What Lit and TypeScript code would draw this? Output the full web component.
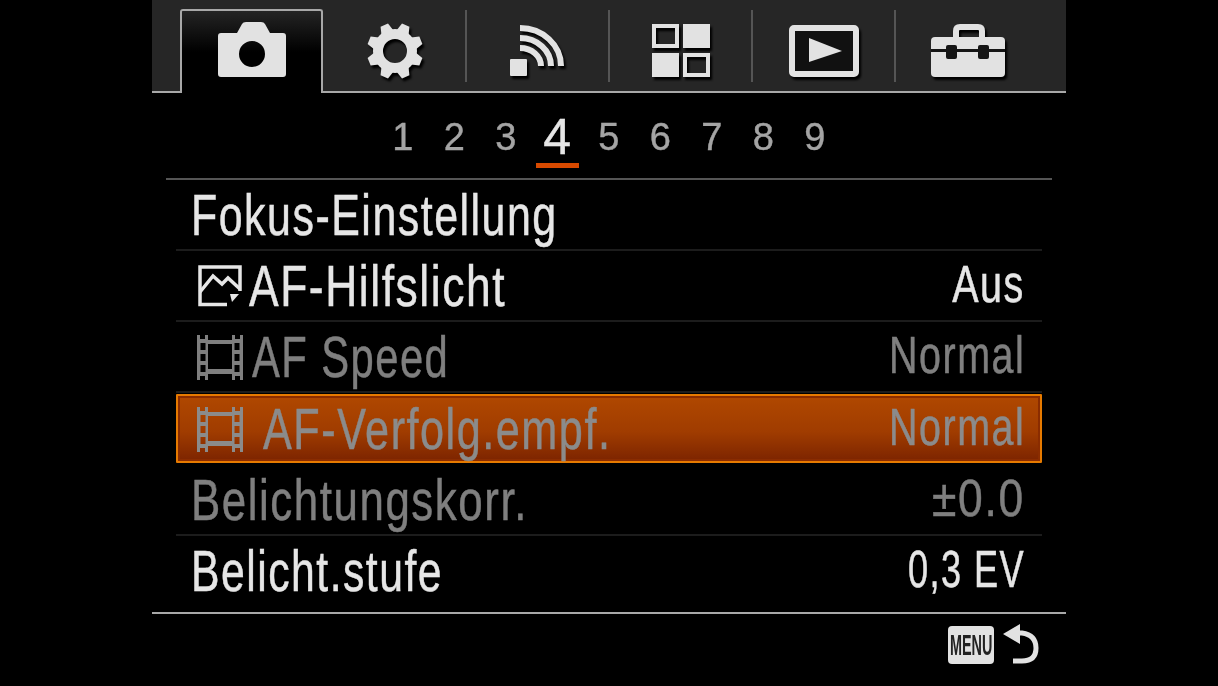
import { LitElement, html, css, svg } from "lit";
import { customElement } from "lit/decorators.js";

const camera = html`<svg width="68" height="55" viewBox="0 0 68 55"><path fill="#e2e2e2" fill-rule="evenodd" d="M3 11H19L24 2Q25 0 28 0H43Q46 0 47 2L52 11H65Q68 11 68 14V52Q68 55 65 55H3Q0 55 0 52V14Q0 11 3 11ZM34 19A13 13 0 1 0 34.01 45A13 13 0 1 0 34 19Z"/></svg>`;
const teeth = [22.5, 67.5, 112.5, 157.5, 202.5, 247.5, 292.5, 337.5].map(
  (a) => svg`<path transform="rotate(${a} 30 30)" fill="#e2e2e2" d="M23 12L26 2H34L37 12Z"/>`
);
const gear = html`<svg width="60" height="60" viewBox="0 0 60 60"><circle cx="30" cy="30" r="17" fill="none" stroke="#e2e2e2" stroke-width="10"/>${teeth}</svg>`;
const signal = html`<svg width="55" height="52" viewBox="0 0 55 52"><g fill="none" stroke="#e2e2e2" stroke-width="6"><path d="M10 3A41 38 0 0 1 51 41"/><path d="M10 13A31 28 0 0 1 41 41"/><path d="M10 23A21 18 0 0 1 31 41"/></g><rect x="0" y="34" width="17" height="17" rx="1" fill="#e2e2e2"/></svg>`;
const grid = html`<svg width="58" height="53" viewBox="0 0 58 53"><g fill="none" stroke="#e2e2e2" stroke-width="4"><rect x="2" y="2" width="23" height="20"/><rect x="33" y="31" width="23" height="20"/></g><rect x="31" y="0" width="27" height="24" fill="#e2e2e2"/><rect x="0" y="29" width="27" height="24" fill="#e2e2e2"/></svg>`;
const play = html`<svg width="70" height="52" viewBox="0 0 70 52"><rect x="3" y="3" width="64" height="46" rx="2" fill="#111" stroke="#e2e2e2" stroke-width="6"/><path d="M20 13L53 26L20 37Z" fill="#e2e2e2"/></svg>`;
const toolbox = html`<svg width="74" height="54" viewBox="0 0 74 54"><path fill="none" stroke="#e2e2e2" stroke-width="6" d="M25 14V7Q25 3 29 3H47Q51 3 51 7V14"/><path fill="#e2e2e2" d="M4 13H70Q74 13 74 17V25H0V17Q0 13 4 13Z"/><path fill="#e2e2e2" d="M0 28H74V49Q74 53 70 53H4Q0 53 0 49Z"/><g fill="#161616"><rect x="0" y="25" width="74" height="3"/><rect x="15" y="21" width="11" height="14" rx="2"/><rect x="47" y="21" width="11" height="14" rx="2"/></g></svg>`;
const landscape = html`<svg class="row-icon" width="44" height="42" viewBox="0 0 44 42"><path fill="none" stroke="currentColor" stroke-width="3.5" d="M29 39.5H2V2H42V26"/><path fill="none" stroke="currentColor" stroke-width="3.5" d="M2 27L15 11L24 19L30 13L42 24"/><path fill="currentColor" d="M32 29H41L34 37Z"/></svg>`;
const filmHoles = [8, 19, 30]
  .map((y) => `M3.5 ${y}h5v7h-5zM37.5 ${y}h5v7h-5z`)
  .join("");
const film = html`<svg class="row-icon film" width="46" height="45" viewBox="0 0 46 45"><path fill="currentColor" fill-rule="evenodd" d="M0 0H3V4H8V0H11V5H35V0H38V4H43V0H46V45H43V41H38V45H35V39H11V45H8V41H3V45H0ZM11 9V34H35V9Z${filmHoles}"/></svg>`;
const backArrow = html`<svg width="38" height="42" viewBox="0 0 38 42"><path fill="#e2e2e2" d="M0 10L17 0L17 20Z"/><path fill="none" stroke="#e2e2e2" stroke-width="5" d="M15 9H19Q33 11 33 24Q33 37 19 37H10"/></svg>`;

const fit = (x: number) => `transform: scaleX(${x})`;

@customElement("app-root")
export class AppRoot extends LitElement {
  static styles = css`
    :host { display: block; width: 1218px; height: 686px; background: #000; overflow: hidden;
      font-family: "Liberation Sans", sans-serif; }
    .screen { width: 914px; height: 686px; margin: 0 auto; display: flex; flex-direction: column; filter: blur(0.45px); }
    .tabs { height: 91px; background: #262626; border-bottom: 2px solid #a8a8a8; display: flex; padding-left: 28px; flex: none; }
    .tab { width: 143px; height: 72px; margin-top: 10px; padding-top: 9px; display: flex; align-items: center; justify-content: center; border-right: 2px solid #555; box-sizing: border-box; }
    .tab svg { filter: drop-shadow(2px 3px 1px #000); }
    .tab.active { height: 84px; margin: 9px 1px -2px 0; background: linear-gradient(#242424, #000 50%); border: 2px solid #a8a8a8; border-bottom: none; border-radius: 3px 3px 0 0; padding: 0 0 5px; }
    .tab.active svg { filter: none; }
    .tab.last { border-right: none; }
    .pages { height: 85px; flex: none; display: flex; padding-left: 225px; color: #a4a4a4; font-size: 38px; -webkit-text-stroke: 0.4px #a4a4a4; }
    .page { width: 51.5px; text-align: center; line-height: 89px; }
    .page.current { color: #e6e6e6; font-size: 50px; position: relative; -webkit-text-stroke: 0.4px #e6e6e6; }
    .page.current::after { content: ""; position: absolute; left: 4px; right: 4px; top: 70px; height: 5px; background: #d84a00; }
    .list { margin: 0 14px; border-top: 2px solid #555; flex: none; }
    .row { height: 69px; margin: 0 10px; border-bottom: 2px solid #1c1c1c; display: flex; align-items: center; padding: 0 17px 0 15px; color: #e6e6e6; -webkit-text-stroke: 0.5px currentColor; }
    .row.last { border-bottom: none; height: 69px; padding-bottom: 5px; }
    .row.off { color: #7f7f7f; }
    .row.sel { height: 65px; margin-top: 1px; margin-bottom: 2px; color: #8b8b8b; border: 2px solid #e67a00; box-shadow: inset 0 0 0 2px #8a2c00; padding: 0 15px 0 13px; border-radius: 1px;
      background: linear-gradient(#b04800, #a03c00 55%, #7c2400); }
    .row-icon { margin: 0 7px 0 7px; flex: none; }
    .row-icon.film { margin: 2px 9px 0 6px; }
    .label { flex: 1; min-width: 0; white-space: nowrap; font-size: 57px; letter-spacing: 2px; }
    .label span { display: inline-block; transform-origin: 0 50%; }
    .value { white-space: nowrap; font-size: 51px; letter-spacing: 2px; transform-origin: 100% 50%; margin-bottom: 2px; }
    .gap { margin-left: 11px; }
    .foot { height: 62px; flex: none; border-top: 2px solid #a8a8a8; margin-top: 2px; display: flex; align-items: center; justify-content: flex-end; gap: 9px; padding: 0 25px 0 0; }
    .menu { width: 46px; height: 38px; border-radius: 4px; background: #e2e2e2; color: #222; font-size: 30px; font-weight: 700; display: flex; align-items: center; justify-content: center; overflow: hidden; }
    .menu span { display: inline-block; transform: scaleX(0.48); }
  `;

  private label(text: string, scale: number, gap = false) {
    return html`<div class="label ${gap ? "gap" : ""}"><span style=${fit(scale)}>${text}</span></div>`;
  }

  private value(text: string, scale: number) {
    return html`<div class="value" style=${fit(scale)}>${text}</div>`;
  }

  render() {
    return html`<div class="screen">
      <div class="tabs">
        <div class="tab active">${camera}</div>
        <div class="tab">${gear}</div>
        <div class="tab">${signal}</div>
        <div class="tab">${grid}</div>
        <div class="tab">${play}</div>
        <div class="tab last">${toolbox}</div>
      </div>
      <div class="pages">
        ${[1, 2, 3, 4, 5, 6, 7, 8, 9].map(
          (n) => html`<div class="page ${n === 4 ? "current" : ""}">${n}</div>`
        )}
      </div>
      <div class="list">
        <div class="row">${this.label("Fokus-Einstellung", 0.753)}</div>
        <div class="row">${landscape}${this.label("AF-Hilfslicht", 0.779)}${this.value("Aus", 0.774)}</div>
        <div class="row off">${film}${this.label("AF Speed", 0.732)}${this.value("Normal", 0.773)}</div>
        <div class="row sel">${film}${this.label("AF-Verfolg.empf.", 0.758, true)}${this.value("Normal", 0.773)}</div>
        <div class="row off">${this.label("Belichtungskorr.", 0.77)}${this.value("±0.0", 0.87)}</div>
        <div class="row last">${this.label("Belicht.stufe", 0.749)}${this.value("0,3 EV", 0.709)}</div>
      </div>
      <div class="foot"><div class="menu"><span>MENU</span></div>${backArrow}</div>
    </div>`;
  }
}
